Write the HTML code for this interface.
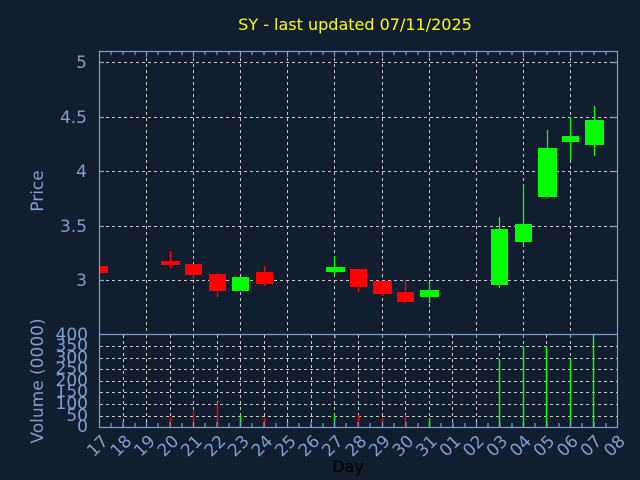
<!DOCTYPE html>
<html><head><meta charset="utf-8"><style>
html,body{margin:0;padding:0;background:#101e2f;}
svg{display:block;font-family:"DejaVu Sans","Liberation Sans",sans-serif;}
</style></head><body>
<svg width="640" height="480" viewBox="0 0 640 480" xmlns="http://www.w3.org/2000/svg">
<rect width="640" height="480" fill="#101e2f"/>
<text x="355" y="30" fill="#ffff00" font-size="16" text-anchor="middle">SY - last updated 07/11/2025</text>
<g stroke="#c8c8c8" stroke-width="1" stroke-dasharray="3,3">
<line x1="100" y1="62.5" x2="617" y2="62.5"/>
<line x1="100" y1="117.5" x2="617" y2="117.5"/>
<line x1="100" y1="171.5" x2="617" y2="171.5"/>
<line x1="100" y1="226.5" x2="617" y2="226.5"/>
<line x1="100" y1="280.5" x2="617" y2="280.5"/>
<line x1="146.5" y1="52" x2="146.5" y2="334"/><line x1="193.5" y1="52" x2="193.5" y2="334"/><line x1="240.5" y1="52" x2="240.5" y2="334"/><line x1="287.5" y1="52" x2="287.5" y2="334"/><line x1="334.5" y1="52" x2="334.5" y2="334"/><line x1="382.5" y1="52" x2="382.5" y2="334"/><line x1="429.5" y1="52" x2="429.5" y2="334"/><line x1="476.5" y1="52" x2="476.5" y2="334"/><line x1="523.5" y1="52" x2="523.5" y2="334"/><line x1="570.5" y1="52" x2="570.5" y2="334"/>
<line x1="100" y1="346.5" x2="617" y2="346.5"/><line x1="100" y1="358.5" x2="617" y2="358.5"/><line x1="100" y1="369.5" x2="617" y2="369.5"/><line x1="100" y1="381.5" x2="617" y2="381.5"/><line x1="100" y1="392.5" x2="617" y2="392.5"/><line x1="100" y1="404.5" x2="617" y2="404.5"/><line x1="100" y1="416.5" x2="617" y2="416.5"/>
<line x1="123.5" y1="335" x2="123.5" y2="427"/><line x1="146.5" y1="335" x2="146.5" y2="427"/><line x1="170.5" y1="335" x2="170.5" y2="427"/><line x1="193.5" y1="335" x2="193.5" y2="427"/><line x1="217.5" y1="335" x2="217.5" y2="427"/><line x1="240.5" y1="335" x2="240.5" y2="427"/><line x1="264.5" y1="335" x2="264.5" y2="427"/><line x1="287.5" y1="335" x2="287.5" y2="427"/><line x1="311.5" y1="335" x2="311.5" y2="427"/><line x1="334.5" y1="335" x2="334.5" y2="427"/><line x1="358.5" y1="335" x2="358.5" y2="427"/><line x1="382.5" y1="335" x2="382.5" y2="427"/><line x1="405.5" y1="335" x2="405.5" y2="427"/><line x1="429.5" y1="335" x2="429.5" y2="427"/><line x1="452.5" y1="335" x2="452.5" y2="427"/><line x1="476.5" y1="335" x2="476.5" y2="427"/><line x1="499.5" y1="335" x2="499.5" y2="427"/><line x1="523.5" y1="335" x2="523.5" y2="427"/><line x1="546.5" y1="335" x2="546.5" y2="427"/><line x1="570.5" y1="335" x2="570.5" y2="427"/><line x1="593.5" y1="335" x2="593.5" y2="427"/>
</g>
<g stroke-width="1.3">
<g fill="#ff0000" stroke="#ff0000">
<rect x="100" y="266" width="8" height="7" stroke="none"/>
<line x1="170.5" y1="251" x2="170.5" y2="268"/><rect x="161" y="261" width="19" height="4" stroke="none"/>
<line x1="193.5" y1="264" x2="193.5" y2="279"/><rect x="185" y="264" width="17" height="11" stroke="none"/>
<line x1="217.5" y1="273" x2="217.5" y2="297"/><rect x="209" y="274" width="17" height="17" stroke="none"/>
<line x1="264.5" y1="266" x2="264.5" y2="286"/><rect x="256" y="272" width="17" height="12" stroke="none"/>
<line x1="358.5" y1="269" x2="358.5" y2="292"/><rect x="350" y="269" width="17" height="18" stroke="none"/>
<line x1="382.5" y1="281" x2="382.5" y2="296"/><rect x="373" y="281" width="19" height="13" stroke="none"/>
<line x1="405.5" y1="280" x2="405.5" y2="303"/><rect x="397" y="292" width="17" height="10" stroke="none"/>
</g>
<g fill="#00ff00" stroke="#00ff00">
<rect x="232" y="277" width="17" height="14" stroke="none"/>
<line x1="334.5" y1="256" x2="334.5" y2="275"/><rect x="326" y="267" width="19" height="5" stroke="none"/>
<line x1="429.5" y1="282" x2="429.5" y2="303"/><rect x="420" y="290" width="19" height="7" stroke="none"/>
<line x1="499.5" y1="217" x2="499.5" y2="288"/><rect x="491" y="229" width="17" height="56" stroke="none"/>
<line x1="523.5" y1="186" x2="523.5" y2="245"/><rect x="515" y="224" width="17" height="18" stroke="none"/>
<line x1="547.5" y1="130" x2="547.5" y2="198"/><rect x="538" y="148" width="19" height="49" stroke="none"/>
<line x1="570.5" y1="117" x2="570.5" y2="160"/><rect x="562" y="136" width="17" height="6" stroke="none"/>
<line x1="594.5" y1="106" x2="594.5" y2="156"/><rect x="585" y="120" width="19" height="25" stroke="none"/>
</g>
</g>
<g stroke-width="1.5">
<g stroke="#ff0000">
<line x1="170.5" y1="417" x2="170.5" y2="427"/><line x1="193.5" y1="411" x2="193.5" y2="427"/><line x1="217.5" y1="403" x2="217.5" y2="427"/><line x1="264.5" y1="418" x2="264.5" y2="427"/><line x1="358.5" y1="415" x2="358.5" y2="427"/><line x1="382.5" y1="418" x2="382.5" y2="427"/><line x1="405.5" y1="415" x2="405.5" y2="427"/>
</g>
<g stroke="#00ff00">
<line x1="240.5" y1="415" x2="240.5" y2="427"/><line x1="334.5" y1="415" x2="334.5" y2="427"/><line x1="429.5" y1="418" x2="429.5" y2="427"/><line x1="499.5" y1="359" x2="499.5" y2="427"/><line x1="523.5" y1="346" x2="523.5" y2="427"/><line x1="546.5" y1="347" x2="546.5" y2="427"/><line x1="570.5" y1="359" x2="570.5" y2="427"/><line x1="593.5" y1="338" x2="593.5" y2="427"/>
</g>
</g>
<g stroke="#7f9fcc" stroke-width="1.2" fill="none">
<rect x="99.5" y="51.5" width="518" height="376"/>
<line x1="99.5" y1="334.5" x2="617.5" y2="334.5"/>
<path d="M111,52v3M123,52v3M135,52v3M146.5,52v5M158,52v3M170,52v3M182,52v3M193.5,52v5M205,52v3M217,52v3M229,52v3M240.5,52v5M252,52v3M264,52v3M276,52v3M287.5,52v5M299,52v3M311,52v3M323,52v3M334.5,52v5M346,52v3M358,52v3M370,52v3M382.5,52v5M394,52v3M406,52v3M418,52v3M429.5,52v5M441,52v3M453,52v3M465,52v3M476.5,52v5M488,52v3M500,52v3M512,52v3M523.5,52v5M535,52v3M547,52v3M559,52v3M570.5,52v5M582,52v3M594,52v3M606,52v3"/>
<path d="M612,62.5h5M612,117.5h5M612,171.5h5M612,226.5h5M612,280.5h5M100,62.5h4M100,117.5h4M100,171.5h4M100,226.5h4M100,280.5h4"/>
<path d="M111,427v-4M123,427v-5M135,427v-4M146.5,427v-5M158,427v-4M170,427v-5M182,427v-4M193.5,427v-5M205,427v-4M217,427v-5M229,427v-4M240.5,427v-5M252,427v-4M264,427v-5M276,427v-4M287.5,427v-5M299,427v-4M311,427v-5M323,427v-4M334.5,427v-5M346,427v-4M358,427v-5M370,427v-4M382.5,427v-5M394,427v-4M406,427v-5M418,427v-4M429.5,427v-5M441,427v-4M453,427v-5M465,427v-4M476.5,427v-5M488,427v-4M500,427v-5M512,427v-4M523.5,427v-5M535,427v-4M547,427v-5M559,427v-4M570.5,427v-5M582,427v-4M594,427v-5M606,427v-4"/>
<path d="M335,334v4M382.5,334v4M429.5,334v4M476.5,334v4M523.5,334v4M570.5,334v4"/>
</g>
<g fill="#7f9fcc" font-size="17" text-anchor="end">
<text x="87" y="68">5</text><text x="87" y="123">4.5</text><text x="87" y="177">4</text><text x="87" y="232">3.5</text><text x="87" y="286">3</text>
<text x="88" y="340">400</text><text x="88" y="351">350</text><text x="88" y="363">300</text><text x="88" y="374">250</text><text x="88" y="386">200</text><text x="88" y="397">150</text><text x="88" y="409">100</text><text x="88" y="421">50</text><text x="88" y="432">0</text>
<text transform="translate(43,191) rotate(-90)" text-anchor="middle">Price</text>
<text transform="translate(43,381) rotate(-90)" text-anchor="middle">Volume (0000)</text>
<text transform="translate(100,433) rotate(-45)" dy="13">17</text>
<text transform="translate(123.5,433) rotate(-45)" dy="13">18</text>
<text transform="translate(147,433) rotate(-45)" dy="13">19</text>
<text transform="translate(170.5,433) rotate(-45)" dy="13">20</text>
<text transform="translate(194,433) rotate(-45)" dy="13">21</text>
<text transform="translate(217.5,433) rotate(-45)" dy="13">22</text>
<text transform="translate(241,433) rotate(-45)" dy="13">23</text>
<text transform="translate(264.5,433) rotate(-45)" dy="13">24</text>
<text transform="translate(288,433) rotate(-45)" dy="13">25</text>
<text transform="translate(311.5,433) rotate(-45)" dy="13">26</text>
<text transform="translate(335,433) rotate(-45)" dy="13">27</text>
<text transform="translate(358.5,433) rotate(-45)" dy="13">28</text>
<text transform="translate(382,433) rotate(-45)" dy="13">29</text>
<text transform="translate(405.5,433) rotate(-45)" dy="13">30</text>
<text transform="translate(429,433) rotate(-45)" dy="13">31</text>
<text transform="translate(452.5,433) rotate(-45)" dy="13">01</text>
<text transform="translate(476,433) rotate(-45)" dy="13">02</text>
<text transform="translate(499.5,433) rotate(-45)" dy="13">03</text>
<text transform="translate(523,433) rotate(-45)" dy="13">04</text>
<text transform="translate(546.5,433) rotate(-45)" dy="13">05</text>
<text transform="translate(570,433) rotate(-45)" dy="13">06</text>
<text transform="translate(593.5,433) rotate(-45)" dy="13">07</text>
<text transform="translate(617,433) rotate(-45)" dy="13">08</text>
</g>
<text x="348" y="472" fill="#000000" font-size="16" text-anchor="middle">Day</text>
</svg>
</body></html>
